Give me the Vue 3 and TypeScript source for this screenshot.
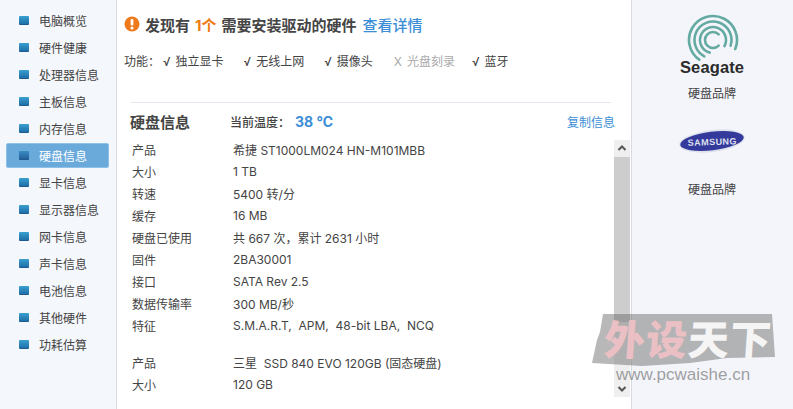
<template>
  <div class="app">
    <aside class="sidebar">
      <div v-for="(item, i) in menu" :key="item" class="menu-item" :class="{ active: i === 5 }">
        <span class="dot"></span>
        <span>{{ item }}</span>
      </div>
    </aside>

    <main class="main">
      <div class="alert">
        <svg width="16" height="16" viewBox="0 0 16 16">
          <circle cx="8" cy="8" r="7.5" fill="#ee7a1c" />
          <rect x="6.6" y="3" width="2.8" height="6.6" rx="1" fill="#fff" />
          <circle cx="8" cy="11.9" r="1.5" fill="#fff" />
        </svg>
        <span>发现有</span>
        <span class="count">1个</span>
        <span>需要安装驱动的硬件</span>
        <span class="link">查看详情</span>
      </div>

      <div class="features">
        <span class="features-label">功能：</span>
        <span v-for="f in features" :key="f.name" class="feature" :class="{ off: !f.on }">
          <i>{{ f.on ? '√' : 'X' }}</i>{{ f.name }}
        </span>
      </div>

      <div class="section-head">
        <strong>硬盘信息</strong>
        <span class="temp">当前温度：<b>38 ℃</b></span>
        <span class="copy">复制信息</span>
      </div>

      <div class="scroll-wrap">
        <div class="rows">
          <div v-for="(row, i) in rows" :key="i" class="row" :class="{ gap: row.gap }">
            <span class="key">{{ row.k }}</span>
            <span>{{ row.v }}</span>
          </div>
        </div>
        <div class="scrollbar">
          <svg width="16" height="17" viewBox="0 0 16 17"><path d="M4.5 10 L8 6.5 L11.5 10" fill="none" stroke="#555" stroke-width="2" /></svg>
          <div class="thumb"></div>
          <svg width="16" height="17" viewBox="0 0 16 17"><path d="M4.5 7 L8 10.5 L11.5 7" fill="none" stroke="#555" stroke-width="2" /></svg>
        </div>
      </div>
    </main>

    <aside class="brands">
      <div class="brand seagate">
        <svg width="66" height="64" viewBox="0 0 66 64">
          <g fill="none" stroke="#64aaa3" stroke-width="2.6" stroke-linecap="round">
            <path v-for="r in rings" :key="r.r" :d="arc(r.r, r.from, r.to)" />
          </g>
          <text x="33" y="59" text-anchor="middle" class="seagate-text" textLength="64">Seagate</text>
        </svg>
        <span>硬盘品牌</span>
      </div>
      <div class="brand samsung">
        <svg width="66" height="28" viewBox="0 0 66 28">
          <ellipse cx="33" cy="14" rx="33" ry="11" transform="rotate(-7 33 14)" fill="#dfe2ee" />
          <ellipse cx="33" cy="14" rx="32" ry="9.2" transform="rotate(-7 33 14)" fill="#343a9c" />
          <text x="33" y="18" text-anchor="middle" class="samsung-text" textLength="49" transform="rotate(-2 33 14)">SAMSUNG</text>
        </svg>
        <span>硬盘品牌</span>
      </div>
    </aside>

    <div class="watermark">
      <div class="wm-shape"></div>
      <div class="wm-title"><span class="wm-red">外设</span><span class="wm-white">天下</span></div>
      <div class="wm-url">www.pcwaishe.cn</div>
    </div>
  </div>
</template>

<script setup lang="ts">
const menu: string[] = [
  '电脑概览', '硬件健康', '处理器信息', '主板信息', '内存信息', '硬盘信息', '显卡信息',
  '显示器信息', '网卡信息', '声卡信息', '电池信息', '其他硬件', '功耗估算'
]

const features = [
  { name: '独立显卡', on: true },
  { name: '无线上网', on: true },
  { name: '摄像头', on: true },
  { name: '光盘刻录', on: false },
  { name: '蓝牙', on: true }
]

const rows: { k: string; v: string; gap?: boolean }[] = [
  { k: '产品', v: '希捷 ST1000LM024 HN-M101MBB' },
  { k: '大小', v: '1 TB' },
  { k: '转速', v: '5400 转/分' },
  { k: '缓存', v: '16 MB' },
  { k: '硬盘已使用', v: '共 667 次，累计 2631 小时' },
  { k: '固件', v: '2BA30001' },
  { k: '接口', v: 'SATA Rev 2.5' },
  { k: '数据传输率', v: '300 MB/秒' },
  { k: '特征', v: 'S.M.A.R.T,  APM,  48-bit LBA,  NCQ' },
  { k: '产品', v: '三星  SSD 840 EVO 120GB (固态硬盘)', gap: true },
  { k: '大小', v: '120 GB' }
]

// logo rings, angles in degrees clockwise from 3 o'clock
const rings = [
  { r: 24, from: 22, to: 125 },
  { r: 18.5, from: 18, to: 118 },
  { r: 13, from: 28, to: 105 },
  { r: 8, from: -45, to: 45 }
]

const arc = (r: number, from: number, to: number): string => {
  const pt = (a: number) => {
    const rad = (a * Math.PI) / 180
    return `${(34 + r * Math.cos(rad)).toFixed(2)} ${(26 + r * Math.sin(rad)).toFixed(2)}`
  }
  return `M${pt(from)} A${r} ${r} 0 1 0 ${pt(to)}`
}
</script>

<style>
html, body { margin: 0; overflow: hidden; }
</style>

<style scoped>
.app {
  position: relative;
  display: flex;
  width: 793px;
  height: 409px;
  overflow: hidden;
  background: #fff;
  color: #444;
  font: 12px Inter, "Noto Sans CJK SC", sans-serif;
}

.sidebar {
  box-sizing: border-box;
  width: 117px;
  padding: 8px 7px 0 6px;
  background: #f4f7fc;
  border-right: 1px solid #d8dce2;
}

.menu-item {
  display: flex;
  align-items: center;
  height: 25px;
  margin-bottom: 2px;
  padding-left: 12px;
  gap: 10px;
  border: 1px solid transparent;
  border-radius: 2px;
  box-sizing: border-box;
}

.menu-item.active {
  background: #6aaadb;
  border-color: #8fc1e8;
  color: #fff;
}

.dot {
  width: 10px;
  height: 9px;
  border-radius: 1px;
  background: linear-gradient(#3a9fd0, #1f6fa8);
  border-bottom: 1px solid #1d5a90;
  box-sizing: border-box;
}

.active .dot {
  background: linear-gradient(#3b8cc4, #235f9b);
}

.main {
  box-sizing: border-box;
  width: 514px;
  padding: 0 0 0 7px;
}

.alert {
  display: flex;
  align-items: center;
  gap: 5px;
  height: 24px;
  margin-top: 12px;
  font-size: 15px;
  font-weight: 700;
  color: #444;
}

.count {
  color: #f07a12;
}

.link {
  color: #3b8ed6;
  font-weight: 500;
  margin-left: 1px;
}

.features {
  display: flex;
  align-items: center;
  height: 20px;
  margin-top: 14px;
}

.features-label {
  width: 39px;
}

.feature {
  margin-right: 20px;
}

.feature i {
  font-style: normal;
  margin-right: 5px;
}

.feature.off {
  color: #aaa;
  margin-left: 1px;
  margin-right: 17px;
}

.section-head {
  display: flex;
  align-items: center;
  box-sizing: content-box;
  width: 480px;
  height: 33px;
  margin: 32px 0 0 7px;
  padding-top: 2px;
  border-top: 1px solid #e3e8ee;
}

.section-head strong {
  font-size: 15px;
  width: 100px;
  margin-left: -1px;
}

.temp {
  font-weight: 500;
}

.temp b {
  margin-left: 5px;
  font-size: 14px;
  color: #3b8ed6;
}

.copy {
  margin-left: auto;
  margin-right: -4px;
  color: #3b8ed6;
}

.scroll-wrap {
  display: flex;
  height: 259px;
  margin-left: 8px;
}

.rows {
  width: 482px;
}

.row {
  display: flex;
  align-items: center;
  height: 22px;
}

.row.gap {
  margin-top: 15px;
}

.row > span {
  white-space: pre;
}

.key {
  width: 101px;
}

.scrollbar {
  display: flex;
  flex-direction: column;
  width: 16px;
  height: 257px;
  margin-top: 2px;
  background: #efefef;
}

.thumb {
  flex: 1;
  margin-bottom: 58px;
  background: #cdcdcd;
}

.brands {
  flex: 1;
  box-sizing: border-box;
  padding-left: 47px;
  background: #f3f5fa;
  border-left: 1px solid #d8dce2;
  display: flex;
  flex-direction: column;
}

.brand {
  display: flex;
  flex-direction: column;
  align-items: center;
  width: 66px;
}

.brand > span {
  white-space: nowrap;
}

.seagate {
  padding-top: 14px;
}

.seagate > span {
  margin-top: 6px;
}

.samsung {
  margin-top: 26px;
}

.samsung > span {
  margin-top: 25px;
}

.seagate-text {
  font: 700 16.5px "Liberation Sans", sans-serif;
  fill: #2b2b2b;
}

.samsung-text {
  font: 700 9px "Liberation Sans", sans-serif;
  fill: #dfe1ef;
}

.watermark {
  position: absolute;
  left: 590px;
  top: 314px;
  width: 190px;
  pointer-events: none;
}

.wm-shape {
  position: absolute;
  left: 0;
  top: 0;
  width: 190px;
  height: 54px;
  background: rgba(105, 105, 105, 0.47);
  clip-path: polygon(13px 0, 182px 0, 185px 43px, 137px 44px, 100px 49px, 52px 52px, 2px 49px, 7px 26px, 10px 18px);
}

.wm-title {
  position: relative;
  height: 50px;
  padding-left: 14px;
  font: 900 41px/46px "Noto Sans CJK SC", sans-serif;
  letter-spacing: 1px;
  white-space: nowrap;
  transform: skewX(-4deg);
}

.wm-red {
  color: #ebc0c5;
}

.wm-white {
  color: #f5f5f5;
}

.wm-url {
  font: 17px "Liberation Sans", sans-serif;
  color: rgba(120, 120, 120, 0.7);
  margin-top: 1px;
  margin-left: 26px;
  white-space: nowrap;
}
</style>
